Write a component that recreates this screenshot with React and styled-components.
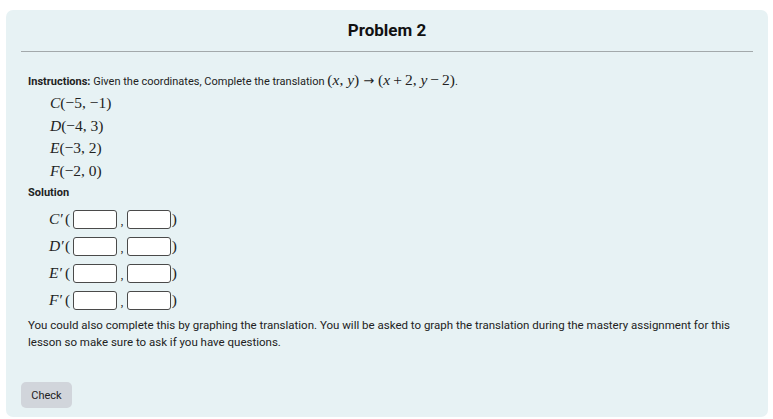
import React from "react";
import styled, { createGlobalStyle } from "styled-components";

const Global = createGlobalStyle`
  html, body { margin: 0; padding: 0; background: #ffffff; }
  body { font-family: Roboto, "Noto Sans", sans-serif; color: #222; }
`;

const Page = styled.div`
  padding: 10px 5px 2px 6px;
`;

const Card = styled.div`
  background: #e7f2f4;
  border-radius: 7px;
  padding: 0 15px 9px 15px;
  height: 407px;
  box-sizing: border-box;
  display: flex;
  flex-direction: column;
`;

const Title = styled.h2`
  margin: 0;
  font-size: 17px;
  font-weight: 700;
  text-align: center;
  color: #111;
  padding: 10px 0 11px;
  line-height: 20px;
  border-bottom: 1px solid #a3a9ab;
`;

const Body = styled.div`
  padding: 0 7px;
  display: flex;
  flex-direction: column;
`;

const Text = styled.p`
  margin: ${(p) => p.$m || "0"};
  font-size: ${(p) => p.$fs || "11px"};
  line-height: 17px;
  color: #222;
`;

const Strong = styled.span`
  font-weight: 700;
`;

const M = styled.span`
  font-family: "Liberation Serif", "DejaVu Serif", serif;
  font-size: 15.5px;
  line-height: 17px;
  font-style: ${(p) => (p.$i ? "italic" : "normal")};
`;

const Op = styled.span`
  margin: 0 3px;
`;

const Arrow = styled.span`
  font-family: "DejaVu Sans", sans-serif;
  font-size: 13px;
  margin: 0 4px;
`;

const PointList = styled.div`
  display: flex;
  flex-direction: column;
  gap: 5px;
  padding-left: 22px;
  margin-top: 4px;
`;

const PointRow = styled.div`
  height: 17.5px;
  line-height: 17px;
  display: flex;
  align-items: center;
`;

const SolutionLabel = styled.div`
  font-size: 11px;
  font-weight: 700;
  margin-top: 5px;
  line-height: 17px;
`;

const SolList = styled.div`
  display: flex;
  flex-direction: column;
  gap: 7px;
  padding-left: 21px;
  margin-top: 8px;
`;

const SolRow = styled.div`
  display: flex;
  align-items: center;
  height: 20px;
`;

const Label = styled.span`
  font-family: "Liberation Serif", "DejaVu Serif", serif;
  font-size: 15.5px;
  font-style: italic;
  width: 16px;
`;

const Paren = styled.span`
  font-family: "Liberation Serif", "DejaVu Serif", serif;
  font-size: 15.5px;
  width: ${(p) => p.$w || "8px"};
  text-align: ${(p) => (p.$right ? "right" : "left")};
`;

const Box = styled.input`
  width: 44px;
  height: 19px;
  box-sizing: border-box;
  border: 1px solid #4a4a4a;
  border-radius: 3px;
  background: #fff;
  padding: 0;
  margin: 0;
`;

const Comma = styled.span`
  font-family: "Liberation Serif", "DejaVu Serif", serif;
  font-size: 12px;
  width: 10px;
  text-align: center;
  padding-top: 4px;
`;

const Spacer = styled.div`
  flex: 1;
`;

const Button = styled.button`
  align-self: flex-start;
  background: #d1d5db;
  border: none;
  border-radius: 5px;
  font-family: Roboto, sans-serif;
  font-size: 11px;
  color: #222;
  width: 51px;
  height: 26px;
  padding: 0;
`;

const points = [
  ["C", "(−5, −1)"],
  ["D", "(−4, 3)"],
  ["E", "(−3, 2)"],
  ["F", "(−2, 0)"],
];

export default function App() {
  return (
    <>
      <Global />
      <Page>
        <Card>
          <Title>Problem 2</Title>
          <Body>
            <Text $m="19px 0 0">
              <Strong>Instructions:</Strong> Given the coordinates, Complete the translation{" "}
              <M>
                (<M $i>x</M>, <M $i>y</M>)<Arrow>→</Arrow>(<M $i>x</M>
                <Op>+</Op>2, <M $i>y</M>
                <Op>−</Op>2)
              </M>
              .
            </Text>
            <PointList>
              {points.map(([l, c]) => (
                <PointRow key={l}>
                  <M><M $i>{l}</M>{c}</M>
                </PointRow>
              ))}
            </PointList>
            <SolutionLabel>Solution</SolutionLabel>
            <SolList>
              {points.map(([l]) => (
                <SolRow key={l}>
                  <Label>{l}′</Label>
                  <Paren>(</Paren>
                  <Box aria-label={`${l} x`} />
                  <Comma>,</Comma>
                  <Box aria-label={`${l} y`} />
                  <Paren $w="6px" $right>)</Paren>
                </SolRow>
              ))}
            </SolList>
            <Text $m="7px 0 0" $fs="11.5px">
              You could also complete this by graphing the translation. You will be asked to graph the translation during the mastery assignment for this lesson so make sure to ask if you have questions.
            </Text>
          </Body>
          <Spacer />
          <Button>Check</Button>
        </Card>
      </Page>
    </>
  );
}
